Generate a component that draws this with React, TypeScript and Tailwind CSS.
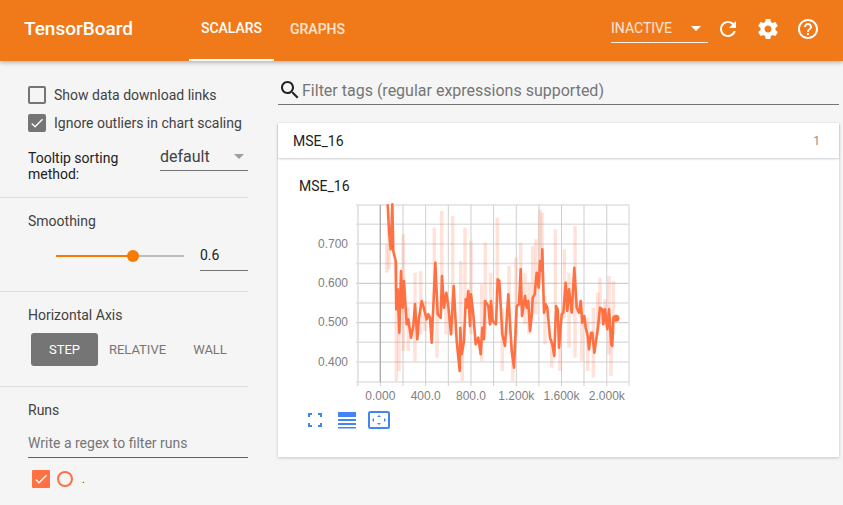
// hand traced from the reference, in crop coordinates (3x, crop origins at x = 375, 460, 545, y = 200)
type Pt = [number, number];
const toPage = (originX: number, pts: Pt[]): Pt[] => pts.map(([x, y]) => [originX + x / 3, 200 + y / 3]);

const smoothed: Pt[] = [
  ...toPage(375, [
    [38, 10], [42, 90], [47, 145], [52, 10], [55, 150], [62, 180], [64, 325], [68, 265], [73, 395], [78, 210], [83, 320], [87, 240],
    [95, 370], [100, 355], [108, 410], [115, 375], [120, 310], [127, 415], [132, 350], [140, 300], [146, 320], [155, 355], [160, 340],
    [165, 350], [170, 425], [181, 185], [188, 340], [197, 350], [201, 225], [207, 320], [214, 275], [220, 315], [228, 400], [236, 255],
    [245, 420], [254, 510],
  ]),
  ...toPage(460, [
    [1, 380], [5, 460], [12, 420], [17, 295], [20, 320], [25, 270], [30, 375], [33, 280], [40, 340], [47, 430], [55, 410], [62, 460],
    [67, 380], [72, 415], [75, 300], [85, 315], [90, 370], [93, 300], [98, 360], [108, 370], [113, 235], [118, 240], [127, 400],
    [135, 435], [145, 280], [155, 450], [162, 500], [170, 315], [177, 310], [182, 205], [186, 345], [195, 285], [200, 320], [205, 300],
    [210, 390], [215, 345], [218, 290], [224, 280], [230, 215], [236, 260], [240, 180], [246, 210], [247, 145], [252, 335], [257, 310],
    [262, 320],
  ]),
  ...toPage(545, [
    [15, 410], [22, 430], [28, 465], [33, 315], [38, 325], [42, 440], [50, 340], [55, 335], [62, 245], [67, 330], [72, 265], [80, 335],
    [88, 200], [95, 320], [102, 335], [107, 300], [112, 365], [118, 345], [122, 380], [128, 405], [132, 445], [138, 395], [142, 395],
    [148, 455], [158, 385], [165, 320], [172, 325], [175, 370], [180, 325], [187, 385], [192, 325], [199, 430], [202, 435], [205, 350],
    [213, 352],
  ]),
];

type Spike = [number, number, number];
const spikeGroup = (originX: number, list: Spike[]): Spike[] =>
  list.map(([x, a, b]) => [originX + x / 3, 200 + a / 3, 200 + b / 3]);

const spikes: Spike[] = [
  ...spikeGroup(375, [
    [35, 130, 215], [42, 90, 205], [64, 180, 540], [72, 330, 510], [85, 100, 450], [100, 320, 450], [120, 215, 480], [137, 210, 400],
    [150, 300, 390], [178, 80, 290], [186, 300, 470], [200, 30, 330], [213, 280, 400], [233, 45, 400], [262, 370, 540],
  ]),
  ...spikeGroup(460, [
    [2, 180, 370], [15, 80, 300], [33, 120, 400], [65, 250, 480], [76, 125, 400], [92, 215, 370], [112, 50, 300], [127, 320, 510],
    [147, 195, 400], [158, 430, 540], [168, 170, 400], [182, 125, 320], [195, 215, 370], [207, 245, 400], [218, 135, 340],
    [228, 115, 340], [240, 25, 230], [246, 35, 250], [255, 285, 430],
  ]),
  ...spikeGroup(545, [
    [20, 415, 500], [31, 85, 320], [45, 400, 510], [58, 145, 350], [72, 215, 440], [90, 75, 470], [110, 300, 480], [128, 350, 510],
    [145, 320, 530], [158, 275, 400], [165, 230, 370], [180, 295, 370], [192, 225, 460], [198, 400, 525], [205, 240, 400],
  ]),
];

const linePath = smoothed.map(([x, y], i) => `${i === 0 ? "M" : "L"}${x.toFixed(1)} ${y.toFixed(1)}`).join(" ");
const lastPoint = smoothed[smoothed.length - 1];
const hMajor = [243, 282.3, 321.6, 361];
const hMinor = [204, 223.3, 262.6, 302, 341.3, 381];
const vLines = [380.3, 403, 425.7, 448.3, 471, 493.6, 516.3, 538.9, 561.5, 584, 606.8];
const yTicks: [number, string][] = [[243, "0.700"], [282.3, "0.600"], [321.6, "0.500"], [361, "0.400"]];
const xTicks: [number, string][] = [[380.3, "0.000"], [425.7, "400.0"], [471, "800.0"], [516.3, "1.200k"], [561.5, "1.600k"], [606.8, "2.000k"]];

const CHECK = "M9 16.17L4.83 12l-1.41 1.41L9 19 21 7l-1.41-1.41z";
const SEARCH = "M15.5 14h-.79l-.28-.27C15.41 12.59 16 11.11 16 9.5 16 5.91 13.09 3 9.5 3S3 5.91 3 9.5 5.91 16 9.5 16c1.61 0 3.09-.59 4.23-1.57l.27.28v.79l5 4.99L20.49 19l-4.99-5zm-6 0C7.01 14 5 11.99 5 9.5S7.01 5 9.5 5 14 7.01 14 9.5 11.99 14 9.5 14z";
const REFRESH = "M17.65 6.35C16.2 4.9 14.21 4 12 4c-4.42 0-7.99 3.58-7.99 8s3.57 8 7.99 8c3.73 0 6.84-2.55 7.73-6h-2.08c-.82 2.33-3.04 4-5.65 4-3.31 0-6-2.69-6-6s2.69-6 6-6c1.66 0 3.14.69 4.22 1.78L13 11h7V4l-2.35 2.35z";
const GEAR = "M19.43 12.98c.04-.32.07-.64.07-.98s-.03-.66-.07-.98l2.11-1.65c.19-.15.24-.42.12-.64l-2-3.46c-.12-.22-.39-.3-.61-.22l-2.49 1c-.52-.4-1.08-.73-1.69-.98l-.38-2.65C14.46 2.18 14.25 2 14 2h-4c-.25 0-.46.18-.49.42l-.38 2.65c-.61.25-1.17.59-1.69.98l-2.49-1c-.23-.09-.49 0-.61.22l-2 3.46c-.13.22-.07.49.12.64l2.11 1.65c-.04.32-.07.65-.07.98s.03.66.07.98l-2.11 1.65c-.19.15-.24.42-.12.64l2 3.46c.12.22.39.3.61.22l2.49-1c.52.4 1.08.73 1.69.98l.38 2.65c.03.24.24.42.49.42h4c.25 0 .46-.18.49-.42l.38-2.65c.61-.25 1.17-.59 1.69-.98l2.49 1c.23.09.49 0 .61-.22l2-3.46c.12-.22.07-.49-.12-.64l-2.11-1.65zM12 15.5c-1.93 0-3.5-1.57-3.5-3.5s1.57-3.5 3.5-3.5 3.5 1.57 3.5 3.5-1.57 3.5-3.5 3.5z";
const HELP = "M11 18h2v-2h-2v2zm1-16C6.48 2 2 6.48 2 12s4.48 10 10 10 10-4.48 10-10S17.52 2 12 2zm0 18c-4.41 0-8-3.59-8-8s3.59-8 8-8 8 3.59 8 8-3.59 8-8 8zm0-14c-2.21 0-4 1.79-4 4h2c0-1.1.9-2 2-2s2 .9 2 2c0 2-3 1.75-3 5h2c0-2.25 3-2.5 3-5 0-2.21-1.79-4-4-4z";

const Icon = ({ d, size = 24 }: { d: string; size?: number }) => (
  <svg width={size} height={size} viewBox="0 0 24 24" fill="currentColor" className="block shrink-0">
    <path d={d} />
  </svg>
);

const Chart = () => (
  <svg width="350" height="210" viewBox="290 196 350 210" className="block">
    {hMinor.map((y) => <line key={y} x1="356" x2="629" y1={y} y2={y} stroke="#e0e0e0" strokeWidth="1.5" />)}
    {hMajor.map((y) => <line key={y} x1="356" x2="629" y1={y} y2={y} stroke="#cfcfcf" strokeWidth="1.2" />)}
    {vLines.map((x) => <line key={x} x1={x} x2={x} y1="204" y2="385" stroke="#cfcfcf" strokeWidth="1" />)}
    <line x1="358" x2="358" y1="204" y2="385" stroke="#ddd" strokeWidth="1.5" />
    <line x1="629" x2="629" y1="204" y2="385" stroke="#e2e2e2" strokeWidth="1.5" />
    <line x1="380.3" x2="380.3" y1="204" y2="381" stroke="#aaa" strokeWidth="1.2" />
    {spikes.map(([x, y1, y2], i) => <line key={i} x1={x} x2={x} y1={y1} y2={y2} stroke="#ff7043" strokeOpacity="0.2" strokeWidth="3.5" />)}
    <path d={linePath} fill="none" stroke="#ff7043" strokeWidth="2.6" strokeLinejoin="round" />
    <circle cx={lastPoint[0]} cy={lastPoint[1]} r="3.5" fill="#ff7043" />
    {yTicks.map(([y, t]) => <text key={t} x="348" y={y + 3.5} textAnchor="end" fontSize="12" fill="#808080" fontFamily="Liberation Sans">{t}</text>)}
    {xTicks.map(([x, t]) => <text key={t} x={x} y="399" textAnchor="middle" fontSize="12" fill="#808080" fontFamily="Liberation Sans">{t}</text>)}
  </svg>
);

const ChartTools = () => (
  <div className="ml-[17px] mt-[4px] flex items-center text-[#4285f4]">
    <svg width="16" height="16" viewBox="0 0 16 16" fill="none" stroke="currentColor" strokeWidth="2" className="block">
      <path d="M2 5V2h3M11 2h3v3M14 11v3h-3M5 14H2v-3" />
    </svg>
    <svg width="18" height="18" viewBox="0 0 18 18" fill="currentColor" className="ml-[15px] block">
      <path d="M0 1h18v5H0zM0 8h18v2H0zM0 12h18v2H0zM0 16h18v1.5H0z" />
    </svg>
    <svg width="22" height="18" viewBox="0 0 22 18" className="ml-[12px] block">
      <rect x="1" y="1" width="20" height="16" rx="1.5" fill="none" stroke="currentColor" strokeWidth="2" />
      <path fill="currentColor" d="M11 4l2 2H9zM11 14l2-2H9zM4 9l2-2v4zM18 9l-2-2v4z" />
    </svg>
  </div>
);

const Divider = () => <div className="h-px w-[248px] bg-[#dcdcdc]" />;

export default function App() {
  return (
    <div className="h-[505px] w-[843px] overflow-hidden bg-[#f5f5f5] font-['Roboto',sans-serif] text-[14px] text-[#212121]">
      <header className="relative z-10 flex h-[61px] items-stretch bg-[#f07a1a] pl-[24px] pr-[23px] text-white shadow-[0_2px_4px_rgba(0,0,0,0.25)]">
        <div className="flex w-[165px] items-center pb-[3px] text-[19px] font-medium">TensorBoard</div>
        <div className="flex w-[85px] items-center justify-center border-b-[2px] border-white pb-[2px] font-medium">SCALARS</div>
        <div className="flex w-[87px] items-center justify-center pb-[2px] font-medium text-white/80">GRAPHS</div>
        <div className="ml-auto flex items-center pb-[3px]">
          <div className="flex h-[28px] w-[97px] items-center justify-between border-b border-white/90 pr-[7px] text-white/80">
            <span>INACTIVE</span>
            <span className="h-0 w-0 border-x-[5px] border-t-[5px] border-x-transparent border-t-white" />
          </div>
          <div className="ml-[8px] flex gap-[16px]">
            <Icon d={REFRESH} />
            <Icon d={GEAR} />
            <Icon d={HELP} />
          </div>
        </div>
      </header>

      <div className="flex">
        <aside className="w-[248px] shrink-0">
          <div className="flex flex-col pl-[28px] pt-[20px]">
            <label className="flex h-[28px] items-center gap-[8px] text-[#424242]">
              <span className="h-[18px] w-[18px] rounded-[2px] border-2 border-[#757575]" />
              Show data download links
            </label>
            <label className="flex h-[28px] items-center gap-[8px] text-[#424242]">
              <span className="flex h-[18px] w-[18px] items-center justify-center rounded-[2px] bg-[#757575] text-white">
                <Icon d={CHECK} size={16} />
              </span>
              Ignore outliers in chart scaling
            </label>
            <div className="mt-[6px] flex h-[48px] items-start justify-between leading-[16px]">
              <div className="pt-[7px]">Tooltip sorting<br />method:</div>
              <div className="flex h-[28px] w-[88px] items-center justify-between border-b border-[#757575] pr-[4px] text-[16px] text-[#424242]">
                default
                <span className="h-0 w-0 border-x-[5px] border-t-[5px] border-x-transparent border-t-[#9e9e9e]" />
              </div>
            </div>
          </div>
          <div className="mt-[6px]"><Divider /></div>

          <div className="h-[93px] pl-[28px] pt-[13px] text-[#424242]">
            <div>Smoothing</div>
            <div className="mt-[9px] flex items-center">
              <div className="relative ml-[28px] h-[2px] w-[128px] bg-[#bdbdbd]">
                <div className="h-[2px] w-[77px] bg-[#f57c00]" />
                <div className="absolute left-[71px] top-[-5px] h-[12px] w-[12px] rounded-full bg-[#f57c00]" />
              </div>
              <div className="ml-[16px] flex h-[30px] w-[48px] items-center border-b border-[#757575] text-[#212121]">0.6</div>
            </div>
          </div>
          <Divider />

          <div className="h-[94px] pl-[28px] pt-[13px] text-[#424242]">
            <div>Horizontal Axis</div>
            <div className="ml-[3px] mt-[7px] flex items-center text-[13px]">
              <div className="flex h-[33px] w-[67px] items-center justify-center rounded-[3px] bg-[#757575] text-white">STEP</div>
              <div className="flex h-[33px] w-[79px] items-center justify-center text-[#757575]">RELATIVE</div>
              <div className="flex h-[33px] w-[66px] items-center justify-center text-[#757575]">WALL</div>
            </div>
          </div>
          <Divider />

          <div className="pl-[28px] pt-[13px]">
            <div className="text-[#424242]">Runs</div>
            <div className="mt-[8px] flex h-[29px] w-[220px] items-center border-b border-[#616161] text-[#757575]">Write a regex to filter runs</div>
            <div className="ml-[4px] mt-[6px] flex h-[30px] items-center gap-[7px]">
              <span className="flex h-[18px] w-[18px] items-center justify-center rounded-[1px] bg-[#ff7043] text-white">
                <Icon d={CHECK} size={16} />
              </span>
              <span className="h-[16px] w-[16px] rounded-full border-2 border-[#ff7043]" />
              <span className="ml-[2px] text-[10px]">.</span>
            </div>
          </div>
        </aside>

        <main className="w-[561px] pl-[30px]">
          <div className="mb-[18px] mt-[15px] flex h-[29px] w-[561px] items-center border-b border-[#757575]">
            <Icon d={SEARCH} />
            <span className="pt-[1px] text-[16px] text-[#757575]">Filter tags (regular expressions supported)</span>
          </div>
          <div className="w-[561px] bg-white shadow-[0_1px_3px_rgba(0,0,0,0.2)]">
            <div className="flex h-[35px] items-center justify-between pl-[15px] pr-[19px] pt-[1px] shadow-[0_1px_2px_rgba(0,0,0,0.2)]">
              <span>MSE_16</span>
              <span className="text-[12px] text-[#a1887f]">1</span>
            </div>
            <div className="h-[299px] px-[12px] pt-[18px]">
              <div className="ml-[9px]">MSE_16</div>
              <Chart />
              <ChartTools />
            </div>
          </div>
        </main>
      </div>
    </div>
  );
}
